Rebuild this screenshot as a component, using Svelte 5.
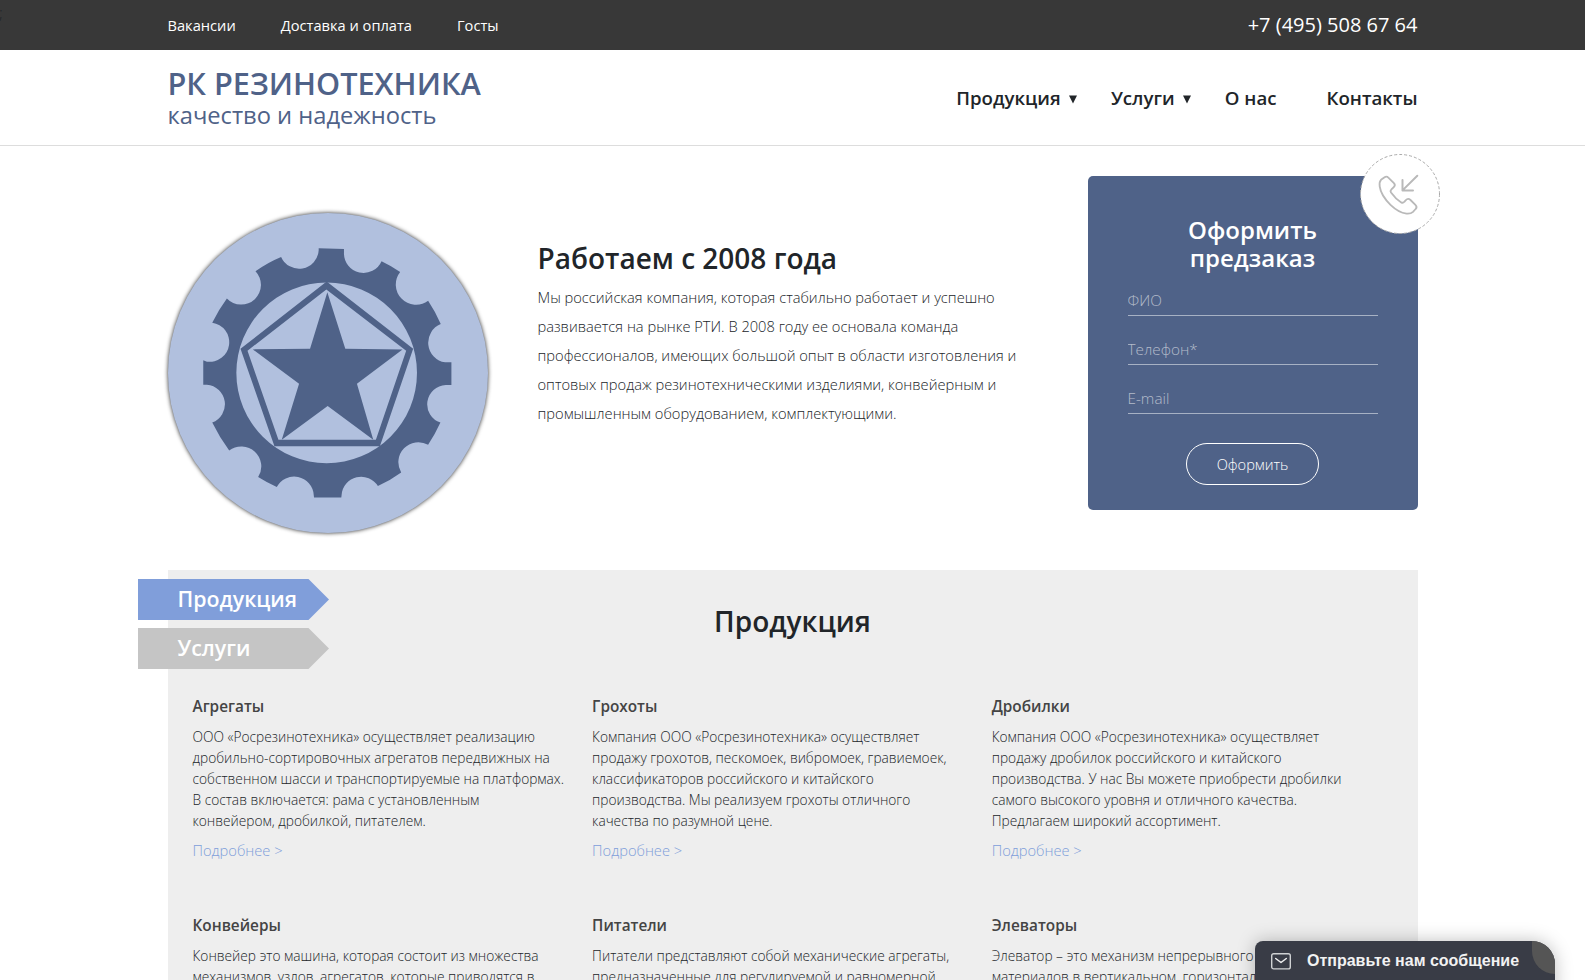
<script>
  const topLinks = ['Вакансии', 'Доставка и оплата', 'Госты'];
  const nav = [
    { label: 'Продукция', drop: true },
    { label: 'Услуги', drop: true },
    { label: 'О нас', drop: false },
    { label: 'Контакты', drop: false }
  ];
  const fields = ['ФИО', 'Телефон*', 'E-mail'];
  const products = [
    { title: 'Агрегаты', lines: ['ООО «Росрезинотехника» осуществляет реализацию', 'дробильно-сортировочных агрегатов передвижных на', 'собственном шасси и транспортируемые на платформах.', 'В состав включается: рама с установленным', 'конвейером, дробилкой, питателем.'] },
    { title: 'Грохоты', lines: ['Компания ООО «Росрезинотехника» осуществляет', 'продажу грохотов, пескомоек, вибромоек, гравиемоек,', 'классификаторов российского и китайского', 'производства. Мы реализуем грохоты отличного', 'качества по разумной цене.'] },
    { title: 'Дробилки', lines: ['Компания ООО «Росрезинотехника» осуществляет', 'продажу дробилок российского и китайского', 'производства. У нас Вы можете приобрести дробилки', 'самого высокого уровня и отличного качества.', 'Предлагаем широкий ассортимент.'] },
    { title: 'Конвейеры', lines: ['Конвейер это машина, которая состоит из множества', 'механизмов, узлов, агрегатов, которые приводятся в'] },
    { title: 'Питатели', lines: ['Питатели представляют собой механические агрегаты,', 'предназначенные для регулируемой и равномерной'] },
    { title: 'Элеваторы', lines: ['Элеватор – это механизм непрерывного', 'материалов в вертикальном, горизонтальном'] }
  ];
  const about = ['Мы российская компания, которая стабильно работает и успешно', 'развивается на рынке РТИ. В 2008 году ее основала команда', 'профессионалов, имеющих большой опыт в области изготовления и', 'оптовых продаж резинотехническими изделиями, конвейерным и', 'промышленным оборудованием, комплектующими.'];
</script>

<div class="page">
  <div class="topbar">
    <span class="stray">;</span>
    <div class="wrap toprow">
      <nav class="toplinks">
        {#each topLinks as l}<a href="#top">{l}</a>{/each}
      </nav>
      <a class="phone" href="#phone">+7 (495) 508 67 64</a>
    </div>
  </div>

  <header>
    <div class="wrap headrow">
      <div class="brand">
        <div class="name">РК РЕЗИНОТЕХНИКА</div>
        <div class="slogan">качество и надежность</div>
      </div>
      <nav class="menu">
        {#each nav as n}
          <a href="#nav" class:drop={n.drop}><span>{n.label}</span>{#if n.drop}<svg width="8" height="9" viewBox="0 0 8 9"><path d="M0 .5h8L4 8.5z" fill="#212529" /></svg>{/if}</a>
        {/each}
      </nav>
    </div>
  </header>

  <section class="wrap hero">
    <div class="emblem">
      <svg viewBox="38 38 962 962" width="320" height="320">
        <path fill="#4f6288" fill-rule="evenodd" d="M491 144L567 146V158A59 59 0 0 0 680 183Q709 197 736 215A61 61 0 0 0 820 302Q842 335 858 372A60 60 0 0 0 871 487H890V555H873A58 58 0 0 0 857 668Q841 703 820 735A60 60 0 0 0 739 818Q706 842 669 859A59 59 0 0 0 560 885L559 893H477L476 885A59 59 0 0 0 365 862Q336 849 309 832A60 60 0 0 0 222 752Q193 713 171 668A59 59 0 0 0 155 554H144V481L155 485A59 59 0 0 0 171 368Q190 329 215 295A59 59 0 0 0 301 213Q337 187 378 170A59 59 0 0 0 491 150ZM515 247A271 271 0 1 0 515 790A271 271 0 1 0 515 247Z" />
        <path fill="#4f6288" fill-rule="evenodd" d="M515 244L775 446L675 739H358L256 446ZM514 268L277 452L370 720H663L754 452Z" />
        <path fill="#4f6288" d="M517 276L571 446L743 448L606 551L655 720L518 618L380 720L432 551L293 448L465 446Z" />
      </svg>
    </div>
    <div class="about">
      <h1>Работаем с 2008 года</h1>
      <p>{#each about as t}{t}<br />{/each}</p>
    </div>
    <form class="order">
      <h2>Оформить<br />предзаказ</h2>
      {#each fields as f}<input placeholder={f} />{/each}
      <button type="button">Оформить</button>
      <div class="badge">
        <svg width="80" height="80" viewBox="0 0 80 80" fill="none" stroke="#b9b9b9" stroke-linecap="round" stroke-linejoin="round">
          <circle cx="40" cy="40" r="39.5" fill="#fff" stroke="#aaa" stroke-width="1" stroke-dasharray="3 2" stroke-linecap="butt" />
          <path stroke-width="1.8" d="M21 25.8L24.6 23.2Q26.6 21.8 28.6 23.8L33.9 29.1Q35.8 31 33.9 33L31.4 35.4Q29.9 36.9 31 38.6Q35.5 45 41.2 48.4Q43 49.4 44.3 47.8L45.6 46.3Q48 43.7 50.5 46L55.4 50.8Q57.6 53 55.6 55L53 57.8Q50.8 60 46.5 59.6Q38.5 58.5 30.5 50.8Q21 41.5 19.7 32.5Q19 28 21 25.8Z" />
          <path stroke-width="2" d="M57.3 21.8L42.5 36.4M42.5 26V36.4H53" />
        </svg>
      </div>
    </form>
  </section>

  <section class="wrap catalog">
    <div class="tabs">
      <div class="tab active">Продукция</div>
      <div class="tab">Услуги</div>
    </div>
    <h2>Продукция</h2>
    <div class="grid">
      {#each products as p}
        <article>
          <h3>{p.title}</h3>
          <p>{#each p.lines as t}{t}<br />{/each}</p>
          <a href="#more">Подробнее &gt;</a>
        </article>
      {/each}
    </div>
  </section>

  <div class="chat">
    <svg width="20" height="17" viewBox="0 0 20 17" fill="none" stroke="#cfd1d3" stroke-width="1.4" stroke-linejoin="round" stroke-linecap="round">
      <rect x=".7" y=".7" width="18.6" height="15.2" rx="2" />
      <path d="M4.7 5.5L10 9.5L15.3 5.5" stroke="#f0f0f0" stroke-width="1.5" />
    </svg>
    <span>Отправьте нам сообщение</span>
    <i class="corner"></i>
  </div>
</div>

<style>
  :global(body) { background: #fff; overflow: hidden; }
  .page { position: relative; height: 980px; overflow: hidden; font-family: 'Open Sans', sans-serif; color: #212529; font-size: 16px; line-height: 1.5; }
  .page * { box-sizing: border-box; }
  a { color: inherit; text-decoration: none; }
  h1, h2, h3, p { margin: 0; }
  .wrap { width: 1250px; margin: 0 auto; }
  .topbar { position: relative; height: 50px; background: #383838; color: #fff; }
  .stray { position: absolute; left: -1px; top: 1px; color: #212529; font-weight: 300; }
  .toprow { display: flex; justify-content: space-between; align-items: center; height: 50px; }
  .toplinks { display: flex; gap: 45px; font-size: 14.65px; line-height: 22px; }
  .phone { font-size: 20px; }
  header { height: 96px; border-bottom: 1px solid #ddd; }
  .headrow { display: flex; justify-content: space-between; height: 95px; }
  .brand { color: #4f6288; padding-top: 14px; }
  .name { font-size: 30.65px; font-weight: 600; line-height: 38px; }
  .slogan { font-size: 23.7px; line-height: 24px; margin-top: 1px; }
  .menu { display: flex; font-size: 18.65px; font-weight: 600; align-items: center; }
  .menu a { display: flex; align-items: center; margin-left: 50px; }
  .menu a.drop + a { margin-left: 34.3px; }
  .menu svg { margin-left: 8px; margin-top: 5px; }
  .hero { display: flex; height: 424px; }
  .emblem { width: 320px; height: 320px; margin-top: 67px; border-radius: 50%; background: #b1c0de; box-shadow: 0 0 4px rgba(0, 0, 0, .85); }
  .emblem svg { display: block; }
  .about { margin-left: 50px; margin-top: 95px; width: 550px; }
  h1 { font-size: 28px; font-weight: 600; line-height: 34px; }
  .about p { margin-top: 8px; font-size: 14.66px; font-weight: 300; line-height: 29px; white-space: nowrap; }
  .order { position: relative; display: flex; flex-direction: column; width: 330px; height: 334px; margin-top: 30px; padding: 40px 40px 0; border-radius: 5px; background: #4f6288; color: #fff; }
  .order h2 { font-size: 24px; font-weight: 600; line-height: 28px; text-align: center; margin-bottom: 12px; }
  input { width: 250px; height: 32px; margin-bottom: 17px; padding: 1px 0 0; border: 0; border-bottom: 1px solid #a7b1c4; background: none; font: 300 15.3px 'Open Sans', sans-serif; }
  input::placeholder { color: #b3bbca; opacity: 1; }
  button { align-self: center; margin-top: 12px; width: 133px; height: 42px; border: 1px solid #fff; border-radius: 21px; background: none; color: #fff; font: 300 14.6px 'Open Sans', sans-serif; }
  .badge { position: absolute; right: -22px; top: -22px; width: 80px; height: 80px; }
  .catalog { position: relative; height: 600px; background: #eee; padding-top: 34px; }
  .tabs { position: absolute; left: -30px; top: 9px; display: grid; gap: 8px; }
  .tab { width: 191.5px; height: 41px; padding-left: 40px; background: #c5c5c5; color: #fff; font-size: 21.35px; font-weight: 600; line-height: 39px; clip-path: polygon(0 0, 171px 0, 100% 50%, 171px 100%, 0 100%); }
  .tab.active { background: #809eda; }
  .catalog h2 { font-size: 28px; font-weight: 600; line-height: 34px; text-align: center; }
  .grid { display: grid; grid-template-columns: repeat(3, 399.6px); padding: 56px 0 0 25px; }
  article { height: 219px; white-space: nowrap; }
  h3 { font-size: 15.35px; font-weight: 600; line-height: 24px; color: #444; margin-bottom: 8px; }
  article p { font-size: 13.73px; font-weight: 300; line-height: 21px; }
  article a { display: block; margin-top: 8px; font-size: 14.67px; font-weight: 300; line-height: 22px; color: #809eda; }
  .chat { position: absolute; left: 1255px; top: 941px; width: 300px; height: 60px; padding: 12px 0 0 16px; display: flex; gap: 16px; align-items: flex-start; background: #393c46; border-radius: 8px 23px 0 0; box-shadow: 0 0 18px rgba(0, 0, 0, .25); color: #f2f2f2; font: bold 16px/16px 'Liberation Sans', sans-serif; white-space: nowrap; }
  .corner { position: absolute; right: 0; top: 0; width: 23px; height: 33px; border-radius: 0 23px 0 23px; background: #555; }
</style>
